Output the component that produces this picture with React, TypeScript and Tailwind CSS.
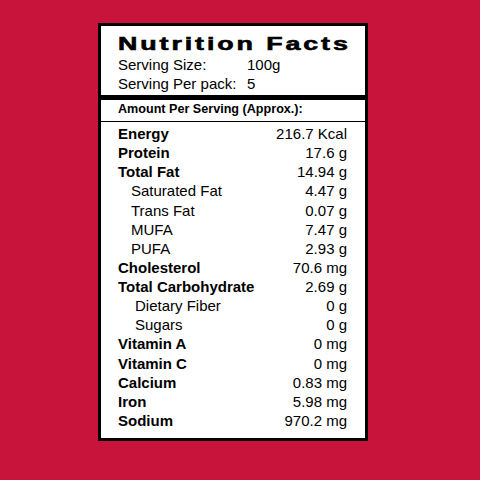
import React from 'react'

type Row = { label: string; value: string; bold?: boolean; indent?: 'sm' | 'md' }

const rows: Row[] = [
  { label: 'Energy', value: '216.7 Kcal', bold: true },
  { label: 'Protein', value: '17.6 g', bold: true },
  { label: 'Total Fat', value: '14.94 g', bold: true },
  { label: 'Saturated Fat', value: '4.47 g', indent: 'sm' },
  { label: 'Trans Fat', value: '0.07 g', indent: 'sm' },
  { label: 'MUFA', value: '7.47 g', indent: 'sm' },
  { label: 'PUFA', value: '2.93 g', indent: 'sm' },
  { label: 'Cholesterol', value: '70.6 mg', bold: true },
  { label: 'Total Carbohydrate', value: '2.69 g', bold: true },
  { label: 'Dietary Fiber', value: '0 g', indent: 'md' },
  { label: 'Sugars', value: '0 g', indent: 'md' },
  { label: 'Vitamin A', value: '0 mg', bold: true },
  { label: 'Vitamin C', value: '0 mg', bold: true },
  { label: 'Calcium', value: '0.83 mg', bold: true },
  { label: 'Iron', value: '5.98 mg', bold: true },
  { label: 'Sodium', value: '970.2 mg', bold: true },
]

export default function App() {
  return (
    <div className="w-[480px] h-[480px] bg-[#c8143b] pt-[23px] pl-[98px] font-['Liberation_Sans',Arial,sans-serif] text-black">
      <div className="w-[270px] h-[418px] bg-white border-[3px] border-black flex flex-col">
        {/* Header */}
        <div className="pl-[17px] pt-[8px] pb-[2px]">
          <div className="h-[20px] text-[18.5px] leading-[20px] font-bold">
            <span className="inline-block origin-left scale-x-[1.45] tracking-[2px] whitespace-nowrap [-webkit-text-stroke:0.6px_black]">
              Nutrition Facts
            </span>
          </div>
          <div className="mt-[2px] text-[15px] leading-[18.5px]">
            <div className="flex">
              <span className="w-[129px]">Serving Size:</span>
              <span>100g</span>
            </div>
            <div className="flex">
              <span className="w-[129px]">Serving Per pack:</span>
              <span>5</span>
            </div>
          </div>
        </div>

        {/* Thick bar */}
        <div className="h-[5px] bg-black" />

        <div className="pl-[17px] pt-[2px] pb-[4px] text-[12.6px] leading-[15px] font-bold border-b-[1.5px] border-black">
          Amount Per Serving (Approx.):
        </div>

        {/* Nutrients */}
        <div className="pl-[17px] pr-[18px] pt-[2px] text-[15px] leading-[19.13px]">
          {rows.map((r) => (
            <div key={r.label} className="flex justify-between">
              <span
                className={
                  (r.bold ? 'font-bold ' : '') +
                  (r.indent === 'sm' ? 'pl-[13px]' : r.indent === 'md' ? 'pl-[17px]' : '')
                }
              >
                {r.label}
              </span>
              <span>{r.value}</span>
            </div>
          ))}
        </div>
      </div>
    </div>
  )
}
